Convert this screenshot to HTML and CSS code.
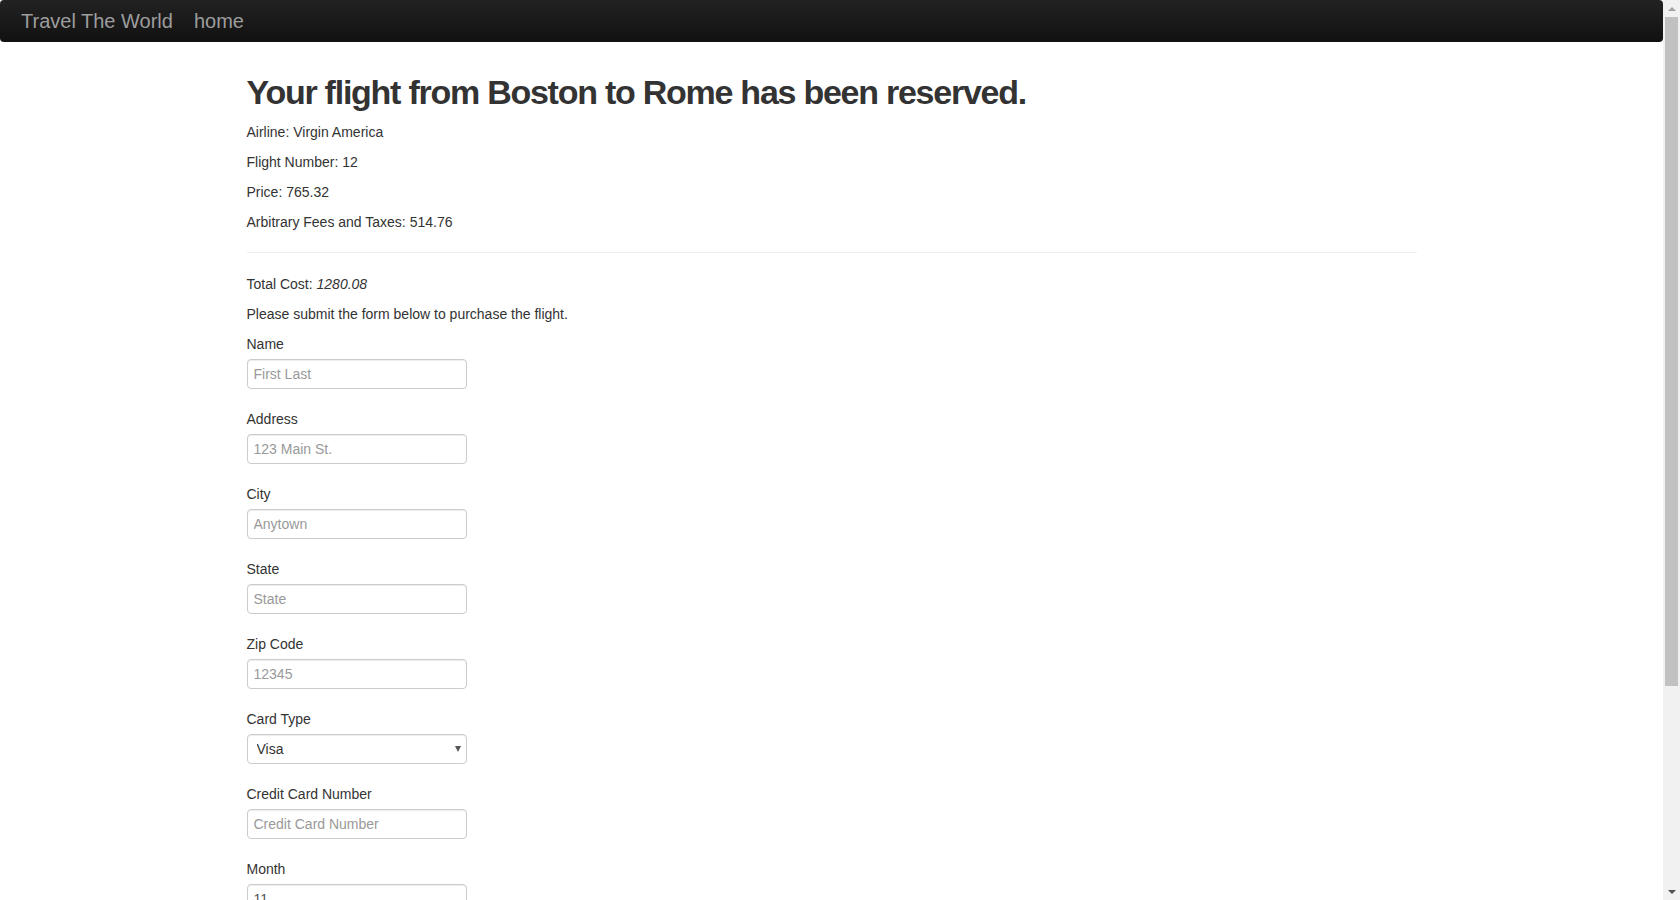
FILE: index.html
```html
<!DOCTYPE html>
<html lang="en">
<head>
<meta charset="utf-8">
<title>Travel The World</title>
<link rel="stylesheet" href="styles.css">
</head>
<body>
<div class="window">
  <div class="viewport">
    <nav class="navbar">
      <a class="brand" href="#">Travel The World</a>
      <a class="nav-link" href="#">home</a>
    </nav>
    <main class="container">
      <h1 class="title">Your flight from Boston to Rome has been reserved.</h1>
      <p class="line">Airline: Virgin America</p>
      <p class="line">Flight Number: 12</p>
      <p class="line">Price: 765.32</p>
      <p class="line">Arbitrary Fees and Taxes: 514.76</p>
      <hr class="divider">
      <p class="line">Total Cost: <em>1280.08</em></p>
      <p class="line">Please submit the form below to purchase the flight.</p>
      <form class="form">
        <div class="form-group">
          <label class="label" for="name">Name</label>
          <input class="field" id="name" type="text" placeholder="First Last">
        </div>
        <div class="form-group">
          <label class="label" for="address">Address</label>
          <input class="field" id="address" type="text" placeholder="123 Main St.">
        </div>
        <div class="form-group">
          <label class="label" for="city">City</label>
          <input class="field" id="city" type="text" placeholder="Anytown">
        </div>
        <div class="form-group">
          <label class="label" for="state">State</label>
          <input class="field" id="state" type="text" placeholder="State">
        </div>
        <div class="form-group">
          <label class="label" for="zip">Zip Code</label>
          <input class="field" id="zip" type="text" placeholder="12345">
        </div>
        <div class="form-group">
          <label class="label" for="card">Card Type</label>
          <div class="select-wrap">
            <select class="field select" id="card">
              <option>Visa</option>
              <option>MasterCard</option>
              <option>American Express</option>
            </select>
          </div>
        </div>
        <div class="form-group">
          <label class="label" for="ccn">Credit Card Number</label>
          <input class="field" id="ccn" type="text" placeholder="Credit Card Number">
        </div>
        <div class="form-group">
          <label class="label" for="month">Month</label>
          <input class="field" id="month" type="text" value="11">
        </div>
        <div class="form-group">
          <label class="label" for="year">Year</label>
          <input class="field" id="year" type="text" value="2017">
        </div>
      </form>
    </main>
  </div>
  <div class="scrollbar">
    <div class="sb-btn"><span class="arrow-up"></span></div>
    <div class="sb-track">
      <div class="sb-thumb"></div>
    </div>
    <div class="sb-btn"><span class="arrow-down"></span></div>
  </div>
</div>
</body>
</html>
```

FILE: styles.css
```css
html, body {
  margin: 0;
  padding: 0;
  height: 100%;
  overflow: hidden;
  background: #fff;
}

body {
  font-family: "Liberation Sans", Arial, sans-serif;
  font-size: 14px;
  line-height: 20px;
  color: #333;
}

.window {
  display: flex;
  height: 900px;
}

.viewport {
  flex: 1;
  min-width: 0;
  overflow: hidden;
}

.navbar {
  display: flex;
  align-items: center;
  gap: 21px;
  height: 42px;
  padding-left: 21px;
  background: linear-gradient(to bottom, #222222 0%, #111111 100%);
  border-radius: 4px;
}

.brand,
.nav-link {
  font-size: 20px;
  line-height: 42px;
  color: #9d9d9d;
  text-decoration: none;
}

.container {
  width: 1170px;
  margin: 0 auto;
}

.title {
  margin: 30px 0 10px;
  font-size: 34px;
  line-height: 40px;
  font-weight: bold;
  letter-spacing: -1.25px;
  color: #333;
}

.line {
  margin: 0 0 10px;
}

.divider {
  margin: 20px 0 21px;
  border: 0;
  border-top: 1px solid #eee;
  height: 0;
}

.form {
  margin: 0;
}

.form-group {
  margin-bottom: 20px;
}

.label {
  display: block;
  margin-bottom: 5px;
  font-weight: normal;
}

.field {
  display: block;
  box-sizing: border-box;
  width: 220px;
  height: 30px;
  padding: 0 6px;
  font-family: "Liberation Sans", Arial, sans-serif;
  font-size: 14px;
  color: #555;
  background: #fff;
  border: 1px solid #ccc;
  border-radius: 4px;
  box-shadow: inset 0 1px 1px rgba(0, 0, 0, 0.075);
  outline: none;
}

.field::placeholder {
  color: #999;
}

.select-wrap {
  position: relative;
  width: 220px;
}

.select {
  -webkit-appearance: none;
  appearance: none;
  padding-left: 9px;
  color: #333;
}

.select-wrap::after {
  content: "";
  position: absolute;
  right: 6px;
  top: 12px;
  border-left: 3.5px solid transparent;
  border-right: 3.5px solid transparent;
  border-top: 6px solid #555;
  pointer-events: none;
}

.scrollbar {
  width: 17px;
  flex: 0 0 17px;
  display: flex;
  flex-direction: column;
  background: #f1f1f1;
}

.sb-btn {
  height: 17px;
  flex: 0 0 17px;
  display: flex;
  align-items: center;
  justify-content: center;
}

.arrow-up {
  width: 0;
  height: 0;
  border-left: 4px solid transparent;
  border-right: 4px solid transparent;
  border-bottom: 4px solid #a3a3a3;
}

.arrow-down {
  width: 0;
  height: 0;
  border-left: 4px solid transparent;
  border-right: 4px solid transparent;
  border-top: 4px solid #505050;
}

.sb-track {
  flex: 1;
  padding: 0 2px;
}

.sb-thumb {
  height: 669px;
  background: #c1c1c1;
}
```
